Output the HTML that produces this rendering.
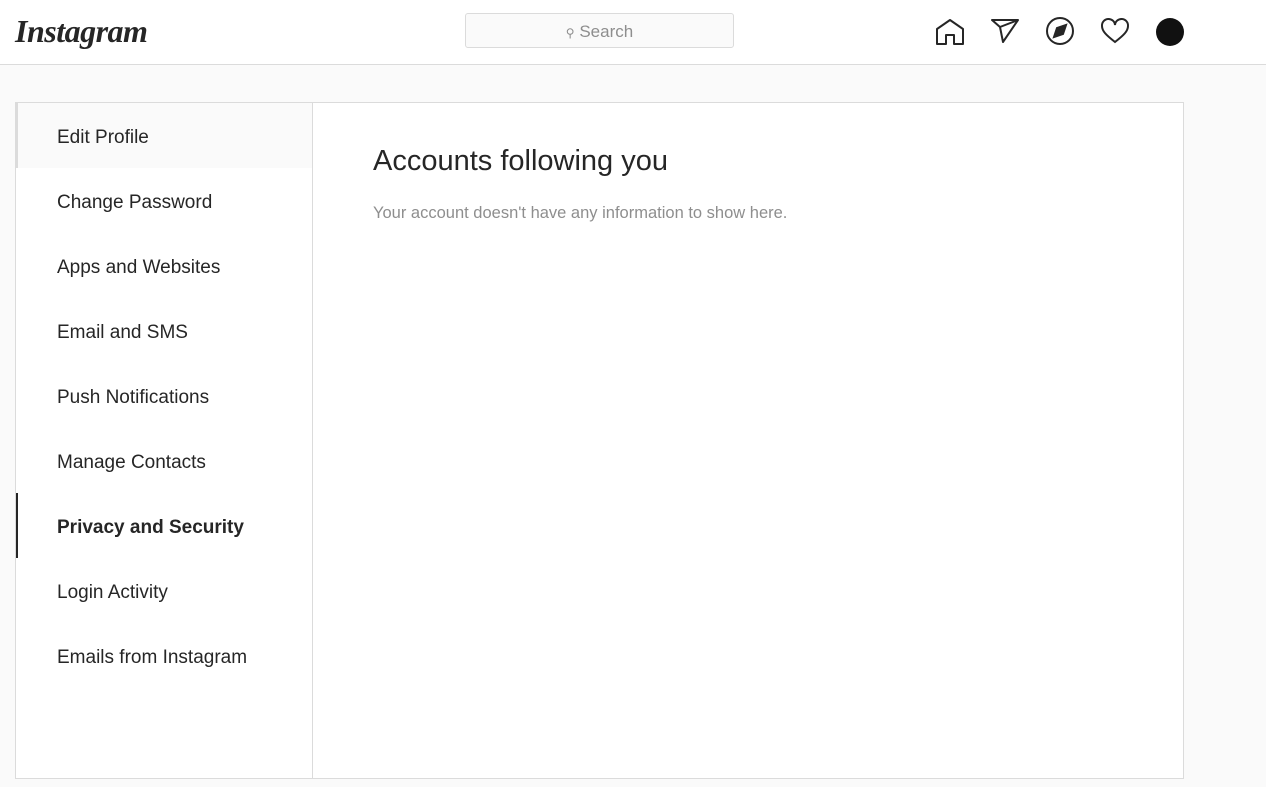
<!DOCTYPE html>
<html><head><style>
body{margin:0;background:#fafafa;font-family:"Liberation Sans",sans-serif;color:#262626;width:1266px;height:787px;overflow:hidden;position:relative}
.hdr{position:absolute;left:0;top:0;width:1266px;height:64px;background:#fff;border-bottom:1px solid #dbdbdb}
.logo{position:absolute;left:15px;top:13px;font-family:"Liberation Serif",serif;font-style:italic;font-weight:bold;font-size:32px;letter-spacing:-0.5px;color:#262626}
.search{position:absolute;left:465px;top:13px;width:267px;height:33px;background:#fafafa;border:1px solid #dbdbdb;border-radius:3px;font-size:17px;color:#8e8e8e;text-align:center;line-height:36px}
.icons svg{position:absolute;top:17px}
.av{position:absolute;left:1156px;top:18px;width:28px;height:28px;border-radius:50%;background:#111}
.box{position:absolute;left:15px;top:102px;width:1167px;height:675px;background:#fff;border:1px solid #dbdbdb}
.side{position:absolute;left:0;top:0;width:296px;height:675px;border-right:1px solid #dbdbdb}
.it{height:65px;line-height:69px;padding-left:39px;font-size:19px;box-sizing:border-box;border-left:2px solid transparent}
.it.h{background:#fafafa;border-left-color:#dbdbdb}
.it.a{border-left-color:#262626;font-weight:bold}
h1{position:absolute;left:357px;top:42px;margin:0;font-weight:normal;font-size:29px}
p{position:absolute;left:357px;top:101px;margin:0;font-size:16.5px;color:#8e8e8e}
</style></head><body>
<div class="hdr">
<div class="logo">Instagram</div>
<div class="search"><span style="font-size:12px">&#9906;</span> Search</div>
<div class="icons">
<svg style="left:935px" width="30" height="30" viewBox="0 0 30 30" fill="none" stroke="#262626" stroke-width="2" stroke-linejoin="round"><path d="M2 27V12L15 3l13 9v15h-9v-9h-8v9z"/></svg>
<svg style="left:991px" width="28" height="28" viewBox="0 0 28 28" fill="none" stroke="#262626" stroke-width="2" stroke-linejoin="round"><path d="M1 3h26L12 25 9 10z M9 10 27 3"/></svg>
<svg style="left:1046px" width="28" height="28" viewBox="0 0 28 28" fill="none" stroke="#262626" stroke-width="2"><circle cx="14" cy="14" r="13"/><path d="M20 8l-3 9-9 3 3-9z" fill="#262626"/></svg>
<svg style="left:1100px" width="30" height="28" viewBox="0 0 30 28" fill="none" stroke="#262626" stroke-width="2"><path d="M15 25C6 18 2 14 2 9a6.5 6.5 0 0 1 13-1 6.5 6.5 0 0 1 13 1c0 5-4 9-13 16z"/></svg>
</div>
<div class="av"></div>
</div>
<div class="box">
<div class="side">
<div class="it h">Edit Profile</div>
<div class="it">Change Password</div>
<div class="it">Apps and Websites</div>
<div class="it">Email and SMS</div>
<div class="it">Push Notifications</div>
<div class="it">Manage Contacts</div>
<div class="it a">Privacy and Security</div>
<div class="it">Login Activity</div>
<div class="it">Emails from Instagram</div>
</div>
<h1>Accounts following you</h1>
<p>Your account doesn't have any information to show here.</p>
</div>
</body></html>
